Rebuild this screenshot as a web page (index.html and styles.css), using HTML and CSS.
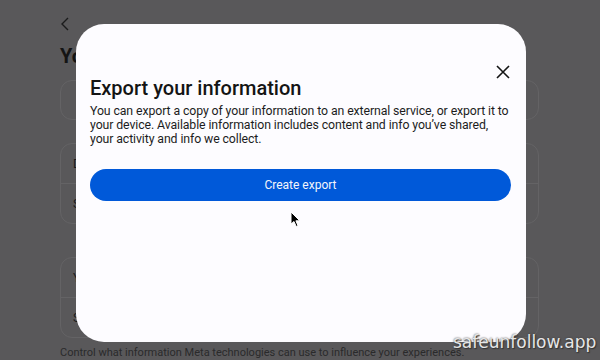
FILE: index.html
```html
<!DOCTYPE html>
<html lang="en">
<head>
<meta charset="utf-8">
<title>Export your information</title>
<link rel="stylesheet" href="styles.css">
</head>
<body>
<div class="page">
  <div class="back">
    <svg width="10" height="14" viewBox="0 0 10 14"><path d="M8 1 L2 7 L8 13" fill="none" stroke="#1b1b1c" stroke-width="1.4"/></svg>
  </div>
  <h1 class="page-title">Your information and permissions</h1>
  <div class="card card-single"></div>
  <div class="card">
    <div class="row">Download your information</div>
    <div class="row">Search history</div>
  </div>
  <div class="card">
    <div class="row">Your activity off Meta technologies</div>
    <div class="row">Specific ads</div>
  </div>
  <p class="page-note">Control what information Meta technologies can use to influence your experiences.</p>
</div>

<div class="modal">
  <button class="close" aria-label="Close">
    <svg width="14" height="14" viewBox="0 0 14 14"><path d="M1 1 L13 13 M13 1 L1 13" stroke="#141414" stroke-width="1.6" fill="none"/></svg>
  </button>
  <h2 class="modal-title">Export your information</h2>
  <p class="modal-text">You can export a copy of your information to an external service, or export it to your device. Available information includes content and info you’ve shared, your activity and info we collect.</p>
  <button class="primary">Create export</button>
</div>

<svg class="cursor" width="12" height="17" viewBox="0 0 12 17"><path d="M1 1 L1 13 L4 10.5 L6.2 15.5 L8 14.7 L5.9 9.8 L9.8 9.8 Z" fill="#000" stroke="#fff" stroke-width="1"/></svg>

<div class="watermark">safeunfollow.app</div>
</body>
</html>
```
FILE: styles.css
```css
* { box-sizing: border-box; }
html, body { margin: 0; padding: 0; }
body {
  width: 600px;
  height: 360px;
  overflow: hidden;
  background: #59585a;
  font-family: Roboto, "Noto Sans", sans-serif;
  position: relative;
}
.page {
  padding: 16px 61px 0 60px;
  display: flex;
  flex-direction: column;
}
.back { height: 16px; display: flex; align-items: center; }
.page-title {
  margin: 10px 0 0;
  font-size: 20px;
  font-weight: 700;
  color: #141414;
  height: 28px;
  line-height: 28px;
  white-space: nowrap;
}
.card {
  border: 1px solid #646365;
  border-radius: 12px;
  margin-top: 23px;
  display: flex;
  flex-direction: column;
}
.card-single { height: 40px; margin-top: 10px; }
.card .row {
  height: 39px;
  padding-left: 12px;
  display: flex;
  align-items: center;
  font-size: 12px;
  color: #1a1a1a;
}
.card .row + .row { border-top: 1px solid #646365; height: 40px; }
.card + .card { margin-top: 33px; }
.card-single + .card { margin-top: 23px; }
.page-note {
  margin: 8px 0 0;
  font-size: 11px;
  line-height: 13px;
  color: #2a2a2b;
  white-space: nowrap;
}
.modal {
  position: absolute;
  left: 76px;
  top: 24px;
  width: 450px;
  height: 318px;
  background: #fdfcff;
  border-radius: 28px;
  padding: 52px 15px 0 14px;
  display: flex;
  flex-direction: column;
}
.close {
  position: absolute;
  right: 16px;
  top: 41px;
  width: 14px;
  height: 14px;
  padding: 0;
  border: 0;
  background: none;
  display: flex;
}
.modal-title {
  margin: 0;
  font-size: 20px;
  font-weight: 500;
  color: #141414;
  line-height: 24px;
}
.modal-text {
  margin: 4px -2px 0 0;
  font-size: 12.3px;
  letter-spacing: -0.1px;
  line-height: 14px;
  color: #1c1c1d;
}
.primary {
  margin-top: 23px;
  height: 32px;
  border: 0;
  border-radius: 16px;
  background: #0059d9;
  color: #f4f6fb;
  font-family: inherit;
  font-size: 12px;
  font-weight: 400;
}
.cursor { position: absolute; left: 290px; top: 211px; }
.watermark {
  position: absolute;
  left: 453px;
  top: 332px;
  font-family: "DejaVu Sans", sans-serif;
  font-size: 17px;
  color: #e6e6e6;
  text-shadow: 0 0 2px #3a3a3a, 1px 1px 1px #333;
}
```
